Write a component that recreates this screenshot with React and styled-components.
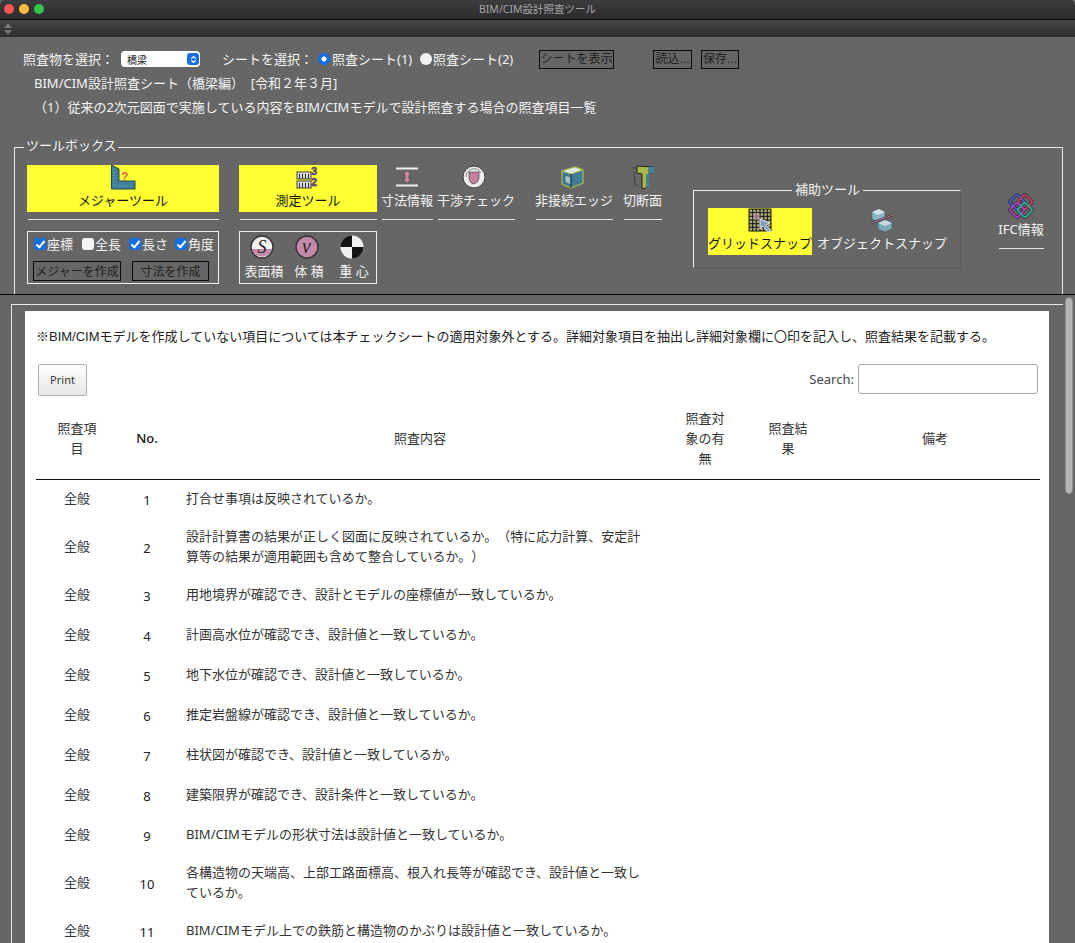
import React from "react"
import styled, { createGlobalStyle } from "styled-components"
import { ChevronsUpDown } from "lucide-react"

const rows = [
  ["全般", 1, "打合せ事項は反映されているか。"],
  ["全般", 2, "設計計算書の結果が正しく図面に反映されているか。（特に応力計算、安定計算等の結果が適用範囲も含めて整合しているか。）"],
  ["全般", 3, "用地境界が確認でき、設計とモデルの座標値が一致しているか。"],
  ["全般", 4, "計画高水位が確認でき、設計値と一致しているか。"],
  ["全般", 5, "地下水位が確認でき、設計値と一致しているか。"],
  ["全般", 6, "推定岩盤線が確認でき、設計値と一致しているか。"],
  ["全般", 7, "柱状図が確認でき、設計値と一致しているか。"],
  ["全般", 8, "建築限界が確認でき、設計条件と一致しているか。"],
  ["全般", 9, "BIM/CIMモデルの形状寸法は設計値と一致しているか。"],
  ["全般", 10, "各構造物の天端高、上部工路面標高、根入れ長等が確認でき、設計値と一致しているか。"],
  ["全般", 11, "BIM/CIMモデル上での鉄筋と構造物のかぶりは設計値と一致しているか。"],
]

const Icon = ({ children, size = 24 }) => (
  <svg width={size} height={size} viewBox="0 0 24 24" overflow="visible" aria-hidden="true">
    {children}
  </svg>
)

const MeasureIcon = () => (
  <Icon>
    <path d="M0.5 0 L8 4 V16 H24 V24 H0.5 Z" fill="#3f7f98" stroke="#1f4a58" strokeWidth="1" />
    <path d="M3 4 V21 H21" fill="none" stroke="#7ab4c8" strokeWidth="1" strokeDasharray="1 2" />
    <text x="10" y="16" fontSize="12" fontWeight="700" fontFamily="Liberation Sans" fill="#f0604a">?</text>
  </Icon>
)

const AreaVolumeIcon = () => (
  <Icon>
    <rect x="1" y="7" width="14" height="7" fill="#d6d6d6" stroke="#444" strokeWidth="1" />
    <rect x="1" y="16" width="14" height="7" fill="#d6d6d6" stroke="#444" strokeWidth="1" />
    <path d="M3.5 9 V14 M6.5 9 V14 M9.5 9 V14 M12.5 9 V14 M3.5 18 V23 M6.5 18 V23 M9.5 18 V23 M12.5 18 V23" stroke="#333" strokeWidth="1" />
    <text x="15" y="10" fontSize="11" fontWeight="700" fontFamily="Liberation Sans" fill="#7a4fb0" stroke="#2e2640" strokeWidth=".4">3</text>
    <text x="15" y="21" fontSize="11" fontWeight="700" fontFamily="Liberation Sans" fill="#7a4fb0" stroke="#2e2640" strokeWidth=".4">2</text>
  </Icon>
)

const DimensionIcon = () => (
  <Icon>
    <path d="M1 3.5 H23 M1 20.5 H23" stroke="#f0f0f0" strokeWidth="2" />
    <path d="M12 5.5 L16 10 H14 V14 H16 L12 18.5 L8 14 H10 V10 H8 Z" fill="#c88aa0" stroke="#4a3a40" strokeWidth=".6" />
  </Icon>
)

const InterferenceIcon = () => (
  <Icon>
    <g transform="translate(-2 0)">
      <circle cx="12" cy="12" r="11" fill="#ececec" stroke="#3c3c3c" strokeWidth="1" />
      <path d="M4 12 A8 8 0 0 1 19 8" fill="none" stroke="#888" strokeWidth="1" />
      <path d="M7 7 H17 V12 Q17 18 11 19 Q7 17 7 13 Z" fill="#c77f9f" stroke="#444" strokeWidth=".7" />
    </g>
  </Icon>
)

const EdgeIcon = () => (
  <Icon>
    <g transform="translate(-2 0)">
      <path d="M2 6 L15 2 L23 5 V18 L11 23 L2 19 Z" fill="#3f7d96" stroke="#a8b84a" strokeWidth="1.2" />
      <path d="M2 6 L15 2 L23 5 L11 9 Z" fill="#dfe8e4" stroke="#a8b84a" strokeWidth="1" />
      <path d="M5 10 L11 12 V20 L5 17 Z" fill="#9fc4d0" stroke="#2e4a54" strokeWidth=".6" />
      <path d="M11 9 V23" stroke="#33464c" strokeWidth="1.4" />
    </g>
  </Icon>
)

const SectionIcon = () => (
  <Icon>
    <path d="M2 3 H7 V6 M7 21 L4 19 L3 7" fill="none" stroke="#222" strokeWidth="1" strokeDasharray="1.5 1" />
    <path d="M6 1 L22 2 V8 L17 9 V22 L11 24 V9 L6 8 Z" fill="#a8b848" stroke="#222" strokeWidth="1" />
    <path d="M17 2 H23 V8 L17 9 Z M15 9 H18 V22 L15 23 Z" fill="#4a7f98" />
  </Icon>
)

const SurfaceIcon = () => (
  <Icon>
    <circle cx="12" cy="12" r="11" fill="#f2f2f2" />
    <path d="M1.5 14 H22.5 A11 11 0 0 1 1.5 14 Z" fill="#c08aa8" />
    <circle cx="12" cy="12" r="11" fill="none" stroke="#3a3036" strokeWidth="1.4" />
    <text x="12" y="18" textAnchor="middle" fontSize="18" fontStyle="italic" fontFamily="Liberation Serif" fill="#2a2228">S</text>
  </Icon>
)

const VolumeIcon = () => (
  <Icon>
    <circle cx="12" cy="12" r="11" fill="#c08aa8" stroke="#3a3036" strokeWidth="1.4" />
    <text x="11.5" y="18" textAnchor="middle" fontSize="20" fontStyle="italic" fontFamily="Liberation Serif" fill="#2a2228">v</text>
  </Icon>
)

const CentroidIcon = () => (
  <Icon>
    <circle cx="12" cy="12" r="11.5" fill="#f0f0f0" />
    <path d="M12 12 V0.5 A11.5 11.5 0 0 0 0.5 12 Z M12 12 V23.5 A11.5 11.5 0 0 0 23.5 12 Z" fill="#151515" />
  </Icon>
)

const GridIcon = () => (
  <Icon>
    <rect x="1" y="1" width="22" height="22" fill="#a8a878" />
    <path d="M1 1 H23 M1 4.7 H23 M1 8.3 H23 M1 12 H23 M1 15.7 H23 M1 19.3 H23 M1 23 H23 M1 1 V23 M4.7 1 V23 M8.3 1 V23 M12 1 V23 M15.7 1 V23 M19.3 1 V23 M23 1 V23" stroke="#111" strokeWidth="1" />
    <rect x="6" y="6" width="5" height="5" fill="#a86a80" stroke="#ddd" strokeWidth=".6" />
    <path d="M12 11 L22 15 L18 17 L23 23 L20 24 L15 18 L12 21 Z" fill="#7da0b8" stroke="#e8e8e8" strokeWidth="1" />
  </Icon>
)

const ObjectSnapIcon = () => (
  <Icon>
    <path d="M2 4 L9 1 L15 4 V11 L8 14 L2 11 Z" fill="#8db6c4" stroke="#3d5c68" strokeWidth=".6" />
    <path d="M2 4 L9 1 L15 4 L8 7 Z" fill="#cfe3ea" />
    <path d="M8 15 L15 12 L22 15 V21 L15 24 L8 21 Z" fill="#7ea9b8" stroke="#3d5c68" strokeWidth=".6" />
    <path d="M8 15 L15 12 L22 15 L15 18 Z" fill="#c3dbe3" />
    <path d="M1 15 L23 7" stroke="#2c2028" strokeWidth="2" />
    <path d="M1 15 L23 7" stroke="#c78aa5" strokeWidth="1" />
  </Icon>
)

const ifcRings = [
  { cx: 8, cy: 8, color: "#3f62d4" },
  { cx: 16, cy: 8, color: "#d0405c" },
  { cx: 8, cy: 16, color: "#b33cc4" },
  { cx: 16, cy: 16, color: "#2db394" },
]

const IfcIcon = () => (
  <Icon>
    <g fill="none">
      {ifcRings.map((r) => (
        <rect
          key={r.color}
          x={r.cx - 5.5}
          y={r.cy - 5.5}
          width="11"
          height="11"
          rx="2"
          transform={`rotate(45 ${r.cx} ${r.cy})`}
          stroke="#2c2c34"
          strokeWidth="3.2"
        />
      ))}
      {ifcRings.map((r) => (
        <rect
          key={r.color}
          x={r.cx - 5.5}
          y={r.cy - 5.5}
          width="11"
          height="11"
          rx="2"
          transform={`rotate(45 ${r.cx} ${r.cy})`}
          stroke={r.color}
          strokeWidth="1.8"
        />
      ))}
    </g>
  </Icon>
)

const StripGlyph = () => (
  <svg width="10" height="12" viewBox="0 0 10 12" aria-hidden="true">
    <path d="M5 0 L9 5 H1 Z M5 12 L9 7 H1 Z" fill="#777" />
  </svg>
)

export default function App() {
  return (
    <>
      <GlobalStyle />
      <Page>
        <TitleBar>
          <Lights>
            <Light $color="#fc5753" />
            <Light $color="#fdbc40" />
            <Light $color="#33c748" />
          </Lights>
          BIM/CIM設計照査ツール
        </TitleBar>
        <ToolStrip>
          <StripGlyph />
        </ToolStrip>

        <Header>
          <ControlRow>
            <Label $width={98}>照査物を選択：</Label>
            <SelectWrap>
              <Select defaultValue="橋梁" aria-label="照査物">
                <option>橋梁</option>
              </Select>
              <SelectArrow>
                <ChevronsUpDown size={9} color="#fff" strokeWidth={3} />
              </SelectArrow>
            </SelectWrap>
            <Label $width={96} $left={22}>シートを選択：</Label>
            <Radio name="sheet" defaultChecked />
            <Label $width={88} $left={2}>照査シート(1)</Label>
            <Radio name="sheet" />
            <Label $width={90} $left={1}>照査シート(2)</Label>
            <PlainButton $width={75} $left={16}>シートを表示</PlainButton>
            <PlainButton $width={39} $left={39}>読込...</PlainButton>
            <PlainButton $width={38} $left={9}>保存...</PlainButton>
          </ControlRow>
          <InfoLine $top={5}>BIM/CIM設計照査シート（橋梁編）&nbsp; [令和２年３月]</InfoLine>
          <InfoLine $top={4}>（1）従来の2次元図面で実施している内容をBIM/CIMモデルで設計照査する場合の照査項目一覧</InfoLine>

          <ToolBox>
            <ToolLegend>ツールボックス</ToolLegend>
            <Column $width={192}>
              <Tool $active $wide>
                <ToolBody>
                  <MeasureIcon />
                  メジャーツール
                </ToolBody>
              </Tool>
              <SubBox>
                <CheckRow>
                  <CheckLabel $width={48}><Check type="checkbox" defaultChecked />座標</CheckLabel>
                  <CheckLabel $width={47}><Check type="checkbox" />全長</CheckLabel>
                  <CheckLabel $width={46}><Check type="checkbox" defaultChecked />長さ</CheckLabel>
                  <CheckLabel><Check type="checkbox" defaultChecked />角度</CheckLabel>
                </CheckRow>
                <ActionRow>
                  <ActionButton $width={88}>メジャーを作成</ActionButton>
                  <ActionButton $width={77}>寸法を作成</ActionButton>
                </ActionRow>
              </SubBox>
            </Column>
            <Column $width={138} $left={20}>
              <Tool $active $wide>
                <ToolBody>
                  <AreaVolumeIcon />
                  測定ツール
                </ToolBody>
              </Tool>
              <MetricBox>
                <Metric>
                  <SurfaceIcon />
                  <MetricText>表面積</MetricText>
                </Metric>
                <Metric>
                  <VolumeIcon />
                  <MetricText>体 積</MetricText>
                </Metric>
                <Metric>
                  <CentroidIcon />
                  <MetricText>重 心</MetricText>
                </Metric>
              </MetricBox>
            </Column>
            <Tool $width={52} $left={4}>
              <ToolBody>
                <DimensionIcon />
                寸法情報
              </ToolBody>
            </Tool>
            <Tool $width={78} $left={4}>
              <ToolBody>
                <InterferenceIcon />
                干渉チェック
              </ToolBody>
            </Tool>
            <Tool $width={78} $left={20}>
              <ToolBody>
                <EdgeIcon />
                非接続エッジ
              </ToolBody>
            </Tool>
            <Tool $width={39} $left={10}>
              <ToolBody>
                <SectionIcon />
                切断面
              </ToolBody>
            </Tool>
            <AssistBox>
              <AssistLegend>補助ツール</AssistLegend>
              <Tool $active $width={104} $plain>
                <ToolBody>
                  <GridIcon />
                  グリッドスナップ
                </ToolBody>
              </Tool>
              <Tool $width={130} $left={5} $plain>
                <ToolBody>
                  <ObjectSnapIcon />
                  オブジェクトスナップ
                </ToolBody>
              </Tool>
            </AssistBox>
            <IfcTool $width={46} $left={37}>
              <ToolBody>
                <IfcIcon />
                IFC情報
              </ToolBody>
            </IfcTool>
          </ToolBox>
        </Header>

        <Frame>
          <Sheet>
            <Note>
              ※BIM/CIMモデルを作成していない項目については本チェックシートの適用対象外とする。詳細対象項目を抽出し詳細対象欄に〇印を記入し、照査結果を記載する。
            </Note>
            <TableControls>
              <PrintButton>Print</PrintButton>
              <SearchLabel>
                Search:
                <SearchInput type="text" />
              </SearchLabel>
            </TableControls>
            <Table>
              <colgroup>
                <col width="82" />
                <col width="58" />
                <col width="488" />
                <col width="82" />
                <col width="84" />
                <col width="210" />
              </colgroup>
              <thead>
                <tr>
                  <Th>照査項目</Th>
                  <Th $strong>No.</Th>
                  <Th>照査内容</Th>
                  <Th>照査対象の有無</Th>
                  <Th>照査結果</Th>
                  <Th>備考</Th>
                </tr>
              </thead>
              <tbody>
                {rows.map(([kind, no, text]) => (
                  <tr key={no}>
                    <Td>{kind}</Td>
                    <NoCell>{no}</NoCell>
                    <ContentCell>{text}</ContentCell>
                    <Td />
                    <Td />
                    <Td />
                  </tr>
                ))}
              </tbody>
            </Table>
          </Sheet>
        </Frame>
        <ScrollThumb />
      </Page>
    </>
  )
}

const GlobalStyle = createGlobalStyle`
  html, body {
    margin: 0;
    height: 100%;
    overflow: hidden;
    background: #666;
  }

  body {
    font-family: "Noto Sans", "Noto Sans CJK JP", sans-serif;
    font-size: 13px;
    text-spacing-trim: space-all;
  }

  * {
    box-sizing: border-box;
  }
`

const Page = styled.div`
  position: relative;
  width: 1075px;
  height: 943px;
  overflow: hidden;
  background: #666;
`

const TitleBar = styled.div`
  position: relative;
  height: 20px;
  background: linear-gradient(#3c3c3f, #2c2c2f);
  border-bottom: 1px solid #0a0a0a;
  border-radius: 5px 5px 0 0;
  color: #a6a6a6;
  font-size: 10.5px;
  line-height: 18px;
  text-align: center;
`

const Lights = styled.div`
  position: absolute;
  top: 4px;
  left: 4px;
  display: flex;
  gap: 5px;
`

const Light = styled.span`
  width: 10px;
  height: 10px;
  border-radius: 50%;
  background: ${(p) => p.$color};
`

const ToolStrip = styled.div`
  display: flex;
  align-items: center;
  height: 17px;
  padding-left: 3px;
  background: linear-gradient(#444446, #2e2e30);
`

const Header = styled.header`
  height: 258px;
  padding-top: 13px;
  border-bottom: 1px solid #0c0c0c;
  color: #f4f4f4;
`

const ControlRow = styled.div`
  display: flex;
  align-items: center;
  height: 18px;
  padding-left: 23px;
`

const Label = styled.span`
  flex: none;
  width: ${(p) => p.$width}px;
  margin-left: ${(p) => p.$left || 0}px;
  padding-bottom: 2px;
  white-space: nowrap;
`

const SelectWrap = styled.div`
  position: relative;
  flex: none;
  width: 79px;
  height: 16px;
`

const Select = styled.select`
  appearance: none;
  display: block;
  width: 100%;
  height: 100%;
  padding: 0 0 0 6px;
  border: 0;
  border-radius: 4px;
  background: #fff;
  color: #222;
  font: 10px "Noto Sans CJK JP", sans-serif;
`

const SelectArrow = styled.span`
  position: absolute;
  top: 2px;
  right: 1px;
  display: flex;
  align-items: center;
  justify-content: center;
  width: 12px;
  height: 12px;
  border-radius: 3px;
  background: #1a6fe8;
  pointer-events: none;
`

const Radio = styled.input.attrs({ type: "radio" })`
  appearance: none;
  flex: none;
  width: 12px;
  height: 12px;
  margin: 0;
  border-radius: 50%;
  background: #f2f2f2;

  &:checked {
    background: radial-gradient(circle, #fff 0 2.2px, #106ee8 2.9px);
  }
`

const PlainButton = styled.button`
  flex: none;
  width: ${(p) => p.$width}px;
  height: 19px;
  margin-left: ${(p) => p.$left}px;
  padding: 0;
  border: 1px solid #0c0c0c;
  background: transparent;
  color: #222;
  font: 12px/17px "Liberation Sans", "Noto Sans CJK JP", sans-serif;
  white-space: nowrap;
`

const InfoLine = styled.div`
  height: 20px;
  margin-top: ${(p) => p.$top}px;
  padding-left: 34px;
  line-height: 20px;
  white-space: nowrap;
`

const ToolBox = styled.fieldset`
  display: flex;
  align-items: flex-start;
  width: 1049px;
  height: 156px;
  margin: 21px 0 0 14px;
  padding: 9px 0 0 12px;
  border: 1px solid #e8e8e8;
  border-bottom: 0;
`

const ToolLegend = styled.legend`
  height: 18px;
  margin-left: -3px;
  padding: 0 1px 0 2px;
  line-height: 15px;
`

const Column = styled.div`
  flex: none;
  width: ${(p) => p.$width}px;
  margin-left: ${(p) => p.$left || 0}px;
`

const ToolBody = styled.div`
  display: flex;
  flex-direction: column;
  align-items: center;
  height: 47px;
  line-height: 23px;
  white-space: nowrap;

  svg {
    flex: none;
  }
`

const Tool = styled.div`
  flex: none;
  width: ${(p) => (p.$wide ? "100%" : `${p.$width}px`)};
  margin-left: ${(p) => p.$left || 0}px;
  border: 0;

  ${ToolBody} {
    background: ${(p) => (p.$active ? "#ffff33" : "transparent")};
    color: ${(p) => (p.$active ? "#161616" : "#f4f4f4")};
  }

  &::after {
    content: ${(p) => (p.$plain ? "none" : '""')};
    display: block;
    height: 1px;
    margin: 7px 0 0 1px;
    background: #e4e4e4;
  }
`

const IfcTool = styled(Tool)`
  margin-top: 29px;
`

const SubBox = styled.div`
  height: 53px;
  margin-top: 11px;
  padding: 3px 0 0 6px;
  border: 1px solid #eee;
`

const MetricBox = styled(SubBox)`
  display: flex;
  gap: 5px;
  padding-left: 4px;
`

const CheckRow = styled.div`
  display: flex;
  align-items: center;
  height: 17px;
`

const CheckLabel = styled.label`
  display: flex;
  align-items: center;
  flex: none;
  width: ${(p) => (p.$width ? `${p.$width}px` : "auto")};
  white-space: nowrap;
`

const Check = styled.input`
  appearance: none;
  position: relative;
  flex: none;
  width: 12px;
  height: 12px;
  margin: 0 1px 0 0;
  border-radius: 3px;
  background: #f4f4f4;

  &:checked {
    background: #116fe6;
  }

  &:checked::after {
    content: "";
    position: absolute;
    left: 4px;
    top: 1px;
    width: 3px;
    height: 7px;
    border: solid #fff;
    border-width: 0 2px 2px 0;
    transform: rotate(40deg);
  }
`

const ActionRow = styled.div`
  display: flex;
  gap: 11px;
  margin: 9px 0 0 -1px;
`

const ActionButton = styled.button`
  flex: none;
  width: ${(p) => p.$width}px;
  height: 20px;
  padding: 0;
  border: 1px solid #0c0c0c;
  background: transparent;
  color: #222;
  font: 12px/18px "Noto Sans CJK JP", sans-serif;
  white-space: nowrap;
`

const Metric = styled.div`
  display: flex;
  flex-direction: column;
  align-items: center;
  width: 40px;

  svg {
    margin-right: 5px;
  }
`

const MetricText = styled.span`
  margin-top: 2px;
  line-height: 20px;
  white-space: pre;
`

const AssistBox = styled.fieldset`
  display: flex;
  flex: none;
  width: 268px;
  height: 87px;
  margin: 16px 0 0 31px;
  padding: 9px 0 0 14px;
  border: 1px solid #5c5c5c;
  border-top-color: #eee;
  border-left-color: #eee;
`

const AssistLegend = styled.legend`
  height: 18px;
  margin-left: 84px;
  padding: 0 3px;
  line-height: 16px;
`

const Frame = styled.main`
  height: 700px;
  margin: 9px 12px 0 11px;
  padding: 6px 0 0 13px;
  border-top: 1px solid #e8e8e8;
  border-left: 1px solid #e8e8e8;
`

const Sheet = styled.section`
  width: 1024px;
  min-height: 700px;
  padding: 16px 10px 0 11px;
  background: #fff;
  color: #333;
`

const Note = styled.p`
  margin: 0;
  font-family: "Liberation Sans", "Noto Sans CJK JP", sans-serif;
  line-height: 20px;
  color: #222;
  white-space: nowrap;
`

const TableControls = styled.div`
  display: flex;
  justify-content: space-between;
  margin: 17px 1px 0 2px;
`

const PrintButton = styled.button`
  width: 49px;
  height: 32px;
  padding: 0 0 2px;
  border: 1px solid #adadad;
  border-radius: 2px;
  background: linear-gradient(#fff, #e6e6e6);
  color: #333;
  font: 11px "Noto Sans", sans-serif;
`

const SearchLabel = styled.label`
  display: flex;
  align-items: center;
  align-self: flex-start;
  gap: 4px;
  height: 30px;
  color: #444;
`

const SearchInput = styled.input`
  width: 180px;
  height: 30px;
  border: 1px solid #aaa;
  border-radius: 3px;
  background: #fff;
`

const Table = styled.table`
  width: 1004px;
  margin-top: 1px;
  border-collapse: collapse;
  table-layout: fixed;
`

const Th = styled.th`
  padding: 11px 18px;
  border-bottom: 1px solid #111;
  font-weight: ${(p) => (p.$strong ? 500 : 400)};
  line-height: 20px;
  color: ${(p) => (p.$strong ? "#111" : "#333")};
  text-align: center;
`

const Td = styled.td`
  height: 40px;
  padding: 6px 10px 10px;
  line-height: 20px;
  text-align: center;
`

const NoCell = styled(Td)`
  padding: 8px 10px;
  color: #222;
`

const ContentCell = styled(Td)`
  padding-right: 22px;
  text-align: left;
`

const ScrollThumb = styled.div`
  position: absolute;
  top: 297px;
  right: 2px;
  width: 8px;
  height: 197px;
  border: 1px solid #8d8d8d;
  border-radius: 4px;
  background: #b5b5b5;
`
